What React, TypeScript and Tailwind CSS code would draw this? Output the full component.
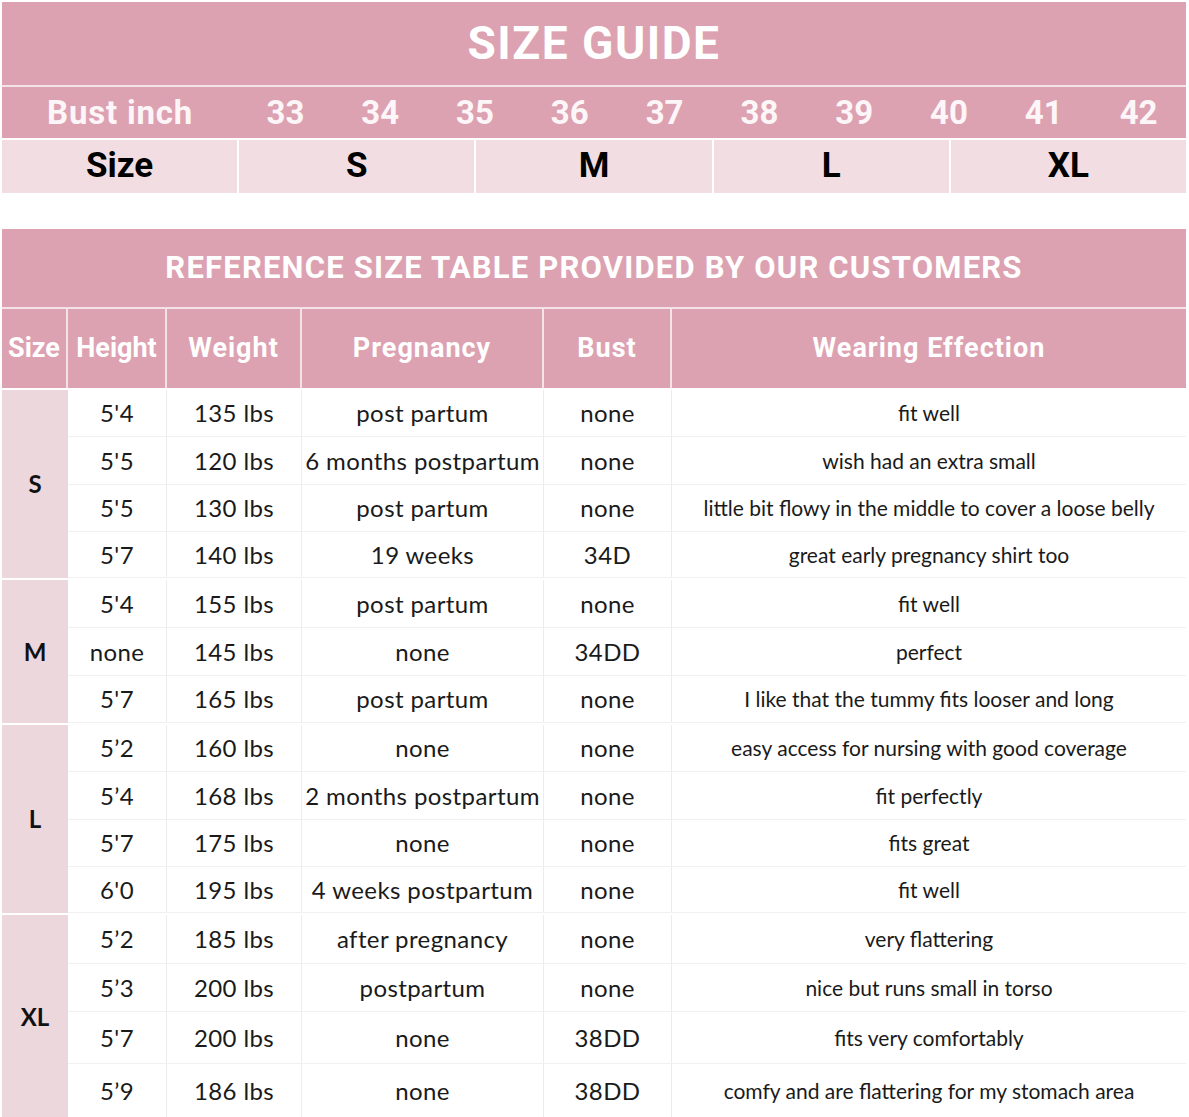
const BUST = ["33", "34", "35", "36", "37", "38", "39", "40", "41", "42"];
const SIZES = ["S", "M", "L", "XL"];

type Row = { h: string; w: string; p: string; b: string; e: string; ht: string };

const GROUPS: { size: string; rows: Row[] }[] = [
  {
    size: "S",
    rows: [
      { h: "5'4", w: "135 lbs", p: "post partum", b: "none", e: "fit well", ht: "h-[47px]" },
      { h: "5'5", w: "120 lbs", p: "6 months postpartum", b: "none", e: "wish had an extra small", ht: "h-[48px]" },
      { h: "5'5", w: "130 lbs", p: "post partum", b: "none", e: "little bit flowy in the middle to cover a loose belly", ht: "h-[47px]" },
      { h: "5'7", w: "140 lbs", p: "19 weeks", b: "34D", e: "great early pregnancy shirt too", ht: "h-[46px]" },
    ],
  },
  {
    size: "M",
    rows: [
      { h: "5'4", w: "155 lbs", p: "post partum", b: "none", e: "fit well", ht: "h-[48px]" },
      { h: "none", w: "145 lbs", p: "none", b: "34DD", e: "perfect", ht: "h-[48px]" },
      { h: "5'7", w: "165 lbs", p: "post partum", b: "none", e: "I like that the tummy fits looser and long", ht: "h-[47px]" },
    ],
  },
  {
    size: "L",
    rows: [
      { h: "5’2", w: "160 lbs", p: "none", b: "none", e: "easy access for nursing with good coverage", ht: "h-[47px]" },
      { h: "5’4", w: "168 lbs", p: "2 months postpartum", b: "none", e: "fit perfectly", ht: "h-[48px]" },
      { h: "5'7", w: "175 lbs", p: "none", b: "none", e: "fits great", ht: "h-[47px]" },
      { h: "6'0", w: "195 lbs", p: "4 weeks postpartum", b: "none", e: "fit well", ht: "h-[46px]" },
    ],
  },
  {
    size: "XL",
    rows: [
      { h: "5’2", w: "185 lbs", p: "after pregnancy", b: "none", e: "very flattering", ht: "h-[49px]" },
      { h: "5’3", w: "200 lbs", p: "postpartum", b: "none", e: "nice but runs small in torso", ht: "h-[48px]" },
      { h: "5'7", w: "200 lbs", p: "none", b: "38DD", e: "fits very comfortably", ht: "h-[52px]" },
      { h: "5’9", w: "186 lbs", p: "none", b: "38DD", e: "comfy and are flattering for my stomach area", ht: "h-[54px]" },
    ],
  },
];

const head = { fontFamily: "Roboto, 'Liberation Sans', sans-serif" };
const body = { fontFamily: "Lato, 'Open Sans', sans-serif" };

const COLS = "grid-cols-[99px_135px_242px_128px_1fr]";

export default function App() {
  return (
    <div className="w-[1189px] h-[1117px] bg-white pt-[2px] pl-[2px]">
      {/* size guide */}
      <div className="w-[1184px]" style={head}>
        <div className="h-[83px] bg-[#dda2b1] flex items-center justify-center text-white text-[46px] font-bold tracking-[1.5px]">
          SIZE GUIDE
        </div>
        <div className="h-[2px] bg-[#f3e3e7]" />
        <div className="h-[51px] bg-[#dda2b1] grid grid-cols-[236px_repeat(10,1fr)] items-center text-[#fdf6f8] text-[33px] font-bold">
          <div className="text-center tracking-[0.8px]">Bust inch</div>
          {BUST.map((b) => (
            <div key={b} className="text-center">{b}</div>
          ))}
        </div>
        <div className="h-[2px] bg-white" />
        <div className="h-[49px] grid grid-cols-5 gap-[2px] bg-white text-[35px] font-bold text-black">
          <div className="bg-[#f1dde2] flex items-center justify-center">Size</div>
          {SIZES.map((s) => (
            <div key={s} className="bg-[#f1dde2] flex items-center justify-center">{s}</div>
          ))}
        </div>
      </div>

      {/* customer table */}
      <div className="w-[1184px] mt-[40px]">
        <div className="h-[78px] bg-[#dda2b1] flex items-center justify-center text-white text-[31px] font-bold tracking-[1.2px]" style={head}>
          REFERENCE SIZE TABLE PROVIDED BY OUR CUSTOMERS
        </div>
        <div className="h-[2px] bg-[#f3e3e7]" />
        <div className="h-[79px] flex bg-[#dda2b1] text-white text-[27px] font-bold tracking-[1px]" style={head}>
          <div className="w-[66px] flex items-center justify-center border-r-[2px] border-[#f3e3e7] tracking-normal">Size</div>
          <div className={`flex-1 grid ${COLS}`}>
            {["Height", "Weight", "Pregnancy", "Bust", "Wearing Effection"].map((t, i) => (
              <div
                key={t}
                className={`flex items-center justify-center ${i < 4 ? "border-r-[2px] border-[#f3e3e7]" : ""} ${i === 0 ? "tracking-normal" : ""}`}
              >
                {t}
              </div>
            ))}
          </div>
        </div>
        <div className="h-[2px] bg-white" />

        {GROUPS.map((g, gi) => (
          <div key={g.size} className={`flex ${gi > 0 ? "border-t-[2px] border-white" : ""}`}>
            <div className="w-[66px] bg-[#ecd7dd] flex items-center justify-center text-[24px] font-bold text-[#111]" style={body}>
              {g.size}
            </div>
            <div className="flex-1">
              {g.rows.map((r, i) => (
                <div
                  key={i}
                  className={`${r.ht} grid ${COLS} border-b border-[#f1f1f1] text-[#1a1a1a]`}
                  style={body}
                >
                  <div className="flex items-center justify-center text-[24px] tracking-[0.4px] border-r border-[#ececec]">{r.h}</div>
                  <div className="flex items-center justify-center text-[24px] tracking-[0.4px] border-r border-[#ececec]">{r.w}</div>
                  <div className="flex items-center justify-center text-[24px] tracking-[0.4px] border-r border-[#ececec] whitespace-nowrap">{r.p}</div>
                  <div className="flex items-center justify-center text-[24px] tracking-[0.4px] border-r border-[#ececec]">{r.b}</div>
                  <div className="flex items-center justify-center text-[21px] whitespace-nowrap">{r.e}</div>
                </div>
              ))}
            </div>
          </div>
        ))}
      </div>
    </div>
  );
}
